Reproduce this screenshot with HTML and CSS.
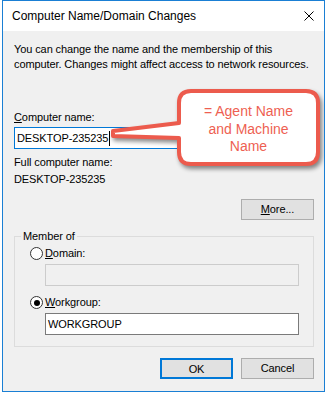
FILE: index.html
```html
<!DOCTYPE html>
<html>
<head>
<meta charset="utf-8">
<link rel="stylesheet" href="styles.css">
</head>
<body>
<div class="window">
  <div class="titlebar">
    <span class="title">Computer Name/Domain Changes</span>
    <svg class="close" width="10" height="10" viewBox="0 0 10 10"><path d="M0.5 0.5L9.5 9.5M9.5 0.5L0.5 9.5" stroke="#000" stroke-width="1" fill="none"/></svg>
  </div>
  <div class="content">
    <p class="desc">You can change the name and the membership of this<br>computer. Changes might affect access to network resources.</p>
    <div class="lbl first"><u>C</u>omputer name:</div>
    <div class="input focused">DESKTOP-235235<span class="caret"></span></div>
    <div class="lbl full">Full computer name:</div>
    <div class="val">DESKTOP-235235</div>
    <div class="more-row"><button class="btn"><u>M</u>ore...</button></div>
    <fieldset class="group">
      <legend>Member of</legend>
      <div class="radio-row"><span class="radio"></span><span><u>D</u>omain:</span></div>
      <div class="input disabled"></div>
      <div class="radio-row wg"><span class="radio checked"></span><span><u>W</u>orkgroup:</span></div>
      <div class="input">WORKGROUP</div>
    </fieldset>
    <div class="actions">
      <button class="btn default">OK</button>
      <button class="btn">Cancel</button>
    </div>
  </div>
  <div class="callout">
    <svg class="callout-shape" width="217" height="92" viewBox="0 0 217 92">
      <path d="M82 7 H197 Q209 7 209 19 V68 Q209 80 197 80 H82 Q70 80 70 68 V54 L4 52 L4 47 L70 39 V19 Q70 7 82 7 Z" fill="#fff" stroke="#ec5b4d" stroke-width="4" stroke-linejoin="round"/>
    </svg>
    <div class="callout-text">= Agent Name<br>and Machine<br>Name</div>
  </div>
</div>
</body>
</html>
```

FILE: styles.css
```css
* { box-sizing: border-box; }
html, body {
  margin: 0;
  padding: 0;
  background: #fff;
}
body {
  font-family: "Liberation Sans", Arial, sans-serif;
  font-size: 11px;
  letter-spacing: -0.1px;
  color: #000;
}
.window {
  position: relative;
  margin-left: 2px;
  width: 323px;
  height: 392px;
  border: 1px solid #1a7fd4;
  background: #f0f0f0;
  display: flex;
  flex-direction: column;
  overflow: hidden;
}
.titlebar {
  flex: none;
  height: 30px;
  background: #fff;
  display: flex;
  align-items: center;
  justify-content: space-between;
  padding: 0 10px 0 9px;
}
.title {
  font-size: 12px;
  letter-spacing: 0;
  line-height: 15px;
  margin-top: 1px;
  white-space: nowrap;
}
.close { display: block; }
.content {
  flex: none;
  padding: 11px 10px 0 11px;
  display: flex;
  flex-direction: column;
  line-height: 15px;
}
.desc {
  margin: 0;
  line-height: 15px;
  white-space: nowrap;
}
.lbl.first { margin-top: 38px; }
.lbl.full { margin-top: 6px; }
.val { margin-top: 2px; }
.input {
  height: 22px;
  border: 1px solid #7a7a7a;
  background: #fff;
  padding: 0 2px;
  line-height: 20px;
  display: flex;
  align-items: center;
}
.input.focused {
  margin-top: 2px;
  border-color: #0078d7;
}
.caret {
  display: inline-block;
  width: 1px;
  height: 15px;
  background: #000;
  margin-left: 1px;
}
.input.disabled {
  background: #f0f0f0;
  border-color: #cccccc;
}
.more-row {
  display: flex;
  justify-content: flex-end;
  margin-top: 12px;
}
.btn {
  font: inherit;
  letter-spacing: inherit;
  width: 73px;
  height: 21px;
  padding: 0;
  background: #e1e1e1;
  border: 1px solid #adadad;
  color: #000;
  line-height: 19px;
}
.btn.default {
  border: 2px solid #0078d7;
}
.group {
  margin: 9px 0 0 0;
  padding: 2px 14px 11px 6px;
  border: 1px solid #dcdcdc;
  min-width: 0;
}
.group legend {
  padding: 0 2px;
  margin-left: 0;
  line-height: 15px;
}
.radio-row {
  display: flex;
  align-items: center;
  gap: 2px;
  height: 15px;
  margin-left: 9px;
}
.radio-row.wg { margin-top: 9px; }
.group .input { margin-left: 24px; margin-top: 3px; }
.radio {
  width: 13px;
  height: 13px;
  border-radius: 50%;
  border: 1px solid #333;
  background: #fff;
  position: relative;
  flex: none;
}
.radio.checked::after {
  content: "";
  position: absolute;
  left: 2.5px;
  top: 2.5px;
  width: 6px;
  height: 6px;
  border-radius: 50%;
  background: #000;
}
.actions {
  display: flex;
  justify-content: flex-end;
  gap: 8px;
  margin-top: 11px;
}
.callout {
  position: absolute;
  left: 106px;
  top: 83px;
  width: 217px;
  height: 92px;
}
.callout-shape {
  position: absolute;
  left: 0;
  top: 0;
  filter: drop-shadow(2px 3px 2px rgba(0,0,0,0.45));
}
.callout-text {
  position: absolute;
  left: 70px;
  top: 9px;
  width: 139px;
  height: 73px;
  display: flex;
  align-items: center;
  justify-content: center;
  text-align: center;
  font-family: "Liberation Sans", Arial, sans-serif;
  font-size: 14px;
  letter-spacing: 0;
  line-height: 17.5px;
  color: #ee5f52;
}
```
